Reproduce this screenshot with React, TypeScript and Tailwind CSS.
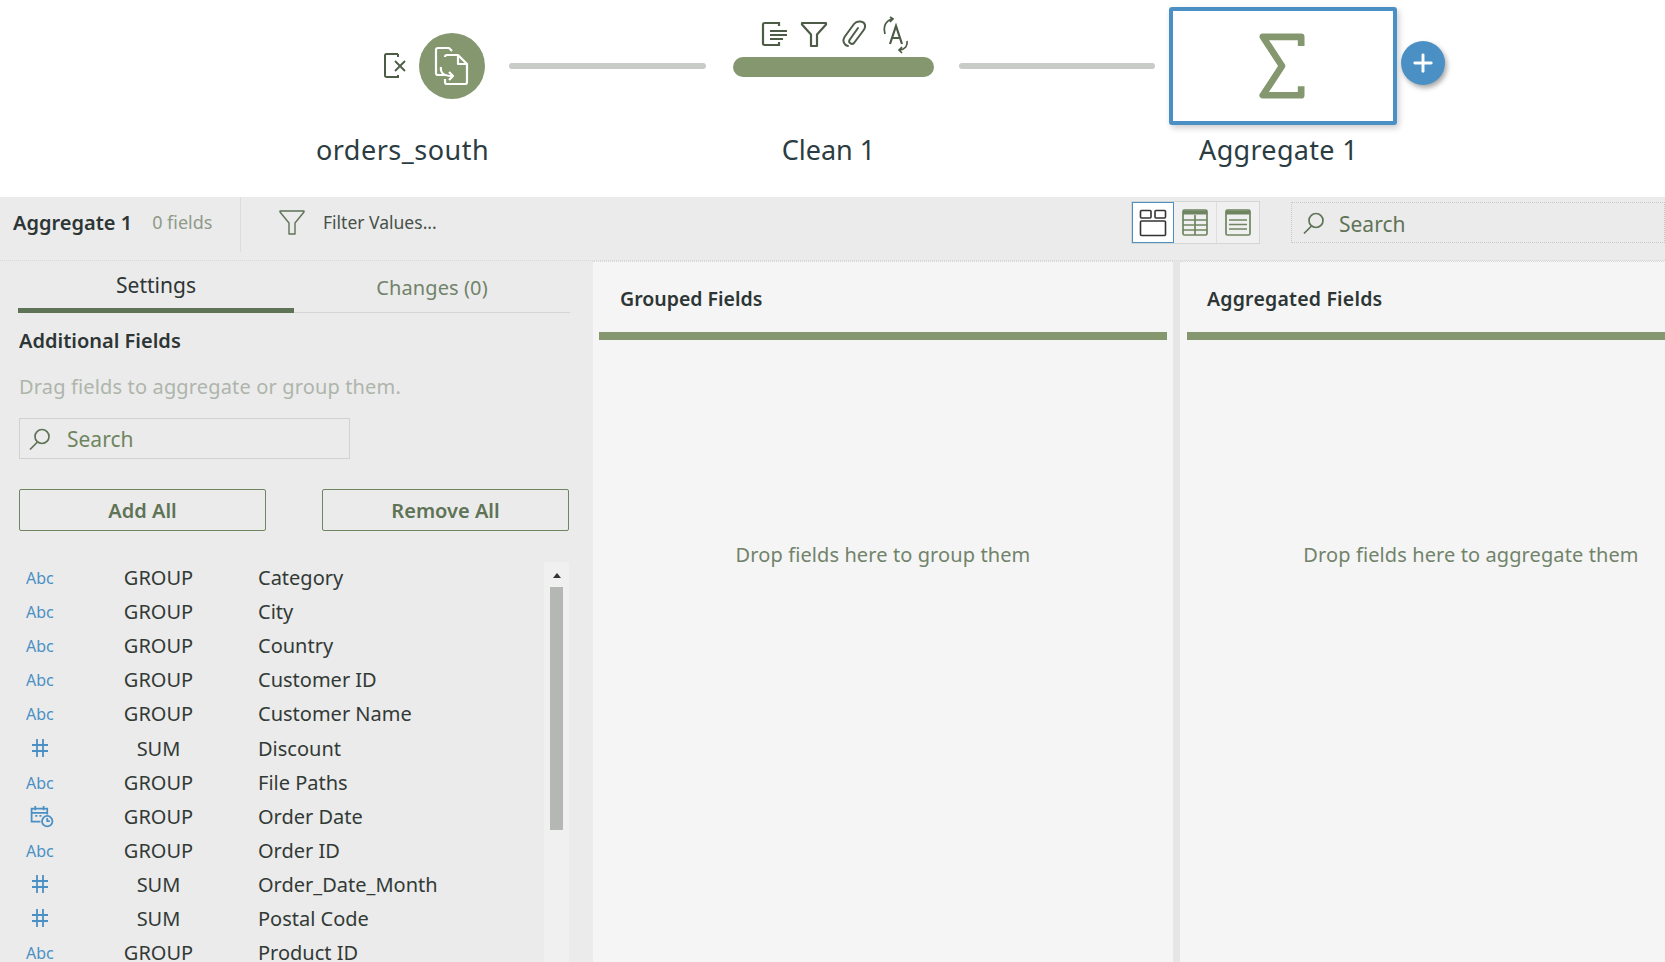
import { Plus } from "lucide-react";

const FONT = "font-['Noto_Sans','Liberation_Sans',sans-serif]";

const fields = [
  { type: "abc", agg: "GROUP", name: "Category" },
  { type: "abc", agg: "GROUP", name: "City" },
  { type: "abc", agg: "GROUP", name: "Country" },
  { type: "abc", agg: "GROUP", name: "Customer ID" },
  { type: "abc", agg: "GROUP", name: "Customer Name" },
  { type: "num", agg: "SUM", name: "Discount" },
  { type: "abc", agg: "GROUP", name: "File Paths" },
  { type: "date", agg: "GROUP", name: "Order Date" },
  { type: "abc", agg: "GROUP", name: "Order ID" },
  { type: "num", agg: "SUM", name: "Order_Date_Month" },
  { type: "num", agg: "SUM", name: "Postal Code" },
  { type: "abc", agg: "GROUP", name: "Product ID" },
];

function FieldType({ type }: { type: string }) {
  if (type === "abc") return <span className="text-[16px] leading-none text-[#4a90c4]">Abc</span>;
  if (type === "num") {
    return (
      <svg width="18" height="20" viewBox="0 0 18 20" fill="none" stroke="#4a90c4" strokeWidth="1.8" className="ml-[5px] -mt-[2px]">
        <path d="M6 1v18M12 1v18M1 7h16M1 13h16" />
      </svg>
    );
  }
  return (
    <svg width="25" height="25" viewBox="0 0 24 24" fill="none" stroke="#4a90c4" strokeWidth="1.7" className="ml-[3px]">
      <path d="M11 17H2.500V4.500h15V10M2.500 8.500h15M6 2v4M14 2v4M6 11.500h2M10 11.500h2" />
      <circle cx="17.500" cy="16.500" r="5" />
      <path d="M17.500 13.500v3h2.500" />
    </svg>
  );
}

function SearchGlass() {
  return (
    <svg width="24" height="24" viewBox="0 0 24 24" fill="none" stroke="#5f7356" strokeWidth="1.7">
      <circle cx="14" cy="9.500" r="7" />
      <path d="M9.500 15L2 22.500" />
    </svg>
  );
}

function ViewButtons() {
  return (
    <div className="flex w-[129px] h-[43px] border border-[#d4d6d4] bg-[#f0f0f0]">
      <div className="w-[42px] h-[41px] border border-[#4a90c4] bg-white flex items-center justify-center">
        <svg width="28" height="28" viewBox="0 0 28 28" fill="none" stroke="#333" strokeWidth="1.6">
          <rect x="1.500" y="1.500" width="10.500" height="7.500" rx="1" />
          <rect x="16" y="1.500" width="10.500" height="7.500" rx="1" />
          <rect x="1.500" y="12" width="25" height="14.500" rx="1" />
        </svg>
      </div>
      <div className="w-[43px] flex items-center justify-center border-r border-[#dedede]">
        <svg width="26" height="27" viewBox="0 0 26 27" fill="none" stroke="#6f8560" strokeWidth="1.7">
          <rect x="1" y="1" width="24" height="25" rx="1.500" />
          <path d="M1 3.500h24" strokeWidth="4" />
          <path d="M1 11h24M1 16h24M1 21h24M13 6v20" />
        </svg>
      </div>
      <div className="flex-1 flex items-center justify-center">
        <svg width="26" height="27" viewBox="0 0 26 27" fill="none" stroke="#6f8560" strokeWidth="1.7">
          <rect x="1" y="1" width="24" height="25" rx="1.500" />
          <path d="M1 3.500h24" strokeWidth="4" />
          <path d="M4 11h18M4 15.500h18M4 20h18" />
        </svg>
      </div>
    </div>
  );
}

function FlowCanvas() {
  return (
    <div className="relative h-[197px] shrink-0 bg-white">
      {/* input step */}
      <svg className="absolute left-[383px] top-[52px]" width="26" height="27" viewBox="0 0 26 27" fill="none" stroke="#4d5c46" strokeWidth="2">
        <path d="M15 2H3.500A1.500 1.500 0 0 0 2 3.500v20A1.500 1.500 0 0 0 3.500 25H15v-2M15 2v3" />
        <path d="M12 9l10 10M22 9L12 19" strokeWidth="1.800" />
      </svg>
      <div className="absolute left-[419px] top-[33px] w-[66px] h-[66px] rounded-full bg-[#84976f] flex items-center justify-center">
        <svg width="40" height="40" viewBox="0 0 40 40" fill="none" stroke="#fff" strokeWidth="2.200" strokeLinejoin="round">
          <path d="M13 29H6a2 2 0 0 1-2-2V4a2 2 0 0 1 2-2h11l3 3" />
          <path d="M13 11a2 2 0 0 1 2-2h11l9 9v18a2 2 0 0 1-2 2H15a2 2 0 0 1-2-2v-3" />
          <path d="M26 9v9h9" />
          <path d="M9 21c-1 6 3 9 11 9M17 26l4 4-4 4" />
        </svg>
      </div>
      <div className="absolute left-[302px] top-[132px] w-[201px] text-center text-[27px] leading-[36px] tracking-[0.5px] text-[#2b3d42] whitespace-nowrap">orders_south</div>

      <div className="absolute left-[509px] top-[63px] w-[197px] h-[6px] rounded-full bg-[#c9cbc9]" />

      {/* clean step */}
      <svg className="absolute left-[761px] top-[20px]" width="28" height="28" viewBox="0 0 28 28" fill="none" stroke="#4d5c46" strokeWidth="2.200">
        <path d="M18 6V3H3.500A1.500 1.500 0 0 0 2 4.500v19A1.500 1.500 0 0 0 3.500 25H18v-3" />
        <path d="M9 11h17M9 15h17M9 19h13" strokeWidth="1.800" />
      </svg>
      <svg className="absolute left-[800px] top-[20px]" width="28" height="28" viewBox="0 0 28 28" fill="none" stroke="#4d5c46" strokeWidth="2.200">
        <path d="M2 3h24v1.500l-9 10V26h-6V14.500L2 4.500z" strokeLinejoin="round" />
      </svg>
      <svg className="absolute left-[840px] top-[19px]" width="28" height="30" viewBox="0 0 28 30" fill="none" stroke="#4d5c46" strokeWidth="2">
        <path d="M8 27c-4-1-6-5-3.500-9L14 5c3-4 10-3 11 1 .5 2-.5 4-2 6l-9 12c-2 2-6 0-4.500-3L18 9" strokeLinecap="round" strokeLinejoin="round" />
      </svg>
      <svg className="absolute left-[881px] top-[16px]" width="30" height="38" viewBox="0 0 30 38" fill="none" stroke="#4d5c46" strokeWidth="2.200">
        <path d="M9 28l6-18 6 18M11 22h8" />
        <path d="M4 18C2 10 5 5 11 3M9 1l3 2-3 3M26 25c1 5-2 8-7 9M21 31l-3 3 3 3" strokeWidth="1.700" />
      </svg>
      <div className="absolute left-[733px] top-[57px] w-[201px] h-[20px] rounded-full bg-[#84976f]" />
      <div className="absolute left-[768px] top-[132px] w-[121px] text-center text-[27px] leading-[36px] text-[#2b3d42] whitespace-nowrap">Clean 1</div>

      <div className="absolute left-[959px] top-[63px] w-[196px] h-[6px] rounded-full bg-[#c9cbc9]" />

      {/* aggregate step */}
      <div className="absolute left-[1169px] top-[7px] w-[228px] h-[118px] rounded-[3px] border-4 border-[#4a90c4] bg-white shadow-[2px_3px_6px_rgba(0,0,0,0.2)] flex items-center justify-center">
        <svg width="46" height="66" viewBox="0 0 48 68" fill="none" stroke="#84976f" strokeWidth="7" className="-ml-[2px] -mt-[1px]">
          <path d="M44 13V3.500H4L24 34 4 64.500h40V55" strokeLinejoin="round" />
        </svg>
      </div>
      <div className="absolute left-[1401px] top-[41px] w-[44px] h-[44px] rounded-full bg-[#4a90c4] shadow-[2px_3px_5px_rgba(0,0,0,0.35)] flex items-center justify-center">
        <Plus size={28} color="#fff" strokeWidth={2.500} />
      </div>
      <div className="absolute left-[1178px] top-[132px] w-[201px] text-center text-[27px] leading-[36px] tracking-[0.3px] text-[#2b3d42] whitespace-nowrap">Aggregate 1</div>
    </div>
  );
}

function Toolbar() {
  return (
    <div className="h-[64px] shrink-0 flex border-b border-dotted border-[#d8d8d8] bg-[#ebebeb]">
      <div className="w-[241px] h-[55px] flex items-center pl-[13px] pb-[4px] border-r border-[#dcdcdc]">
        <span className="text-[20px] font-semibold text-[#2d3535] whitespace-nowrap">Aggregate 1</span>
        <span className="ml-[20px] text-[18px] text-[#8f9a8a] whitespace-nowrap">0 fields</span>
      </div>
      <div className="flex items-start pt-[12px] pl-[38px]">
        <svg width="26" height="27" viewBox="0 0 26 27" fill="none" stroke="#5f7356" strokeWidth="1.400">
          <path d="M1 2h24v1L16 14v11h-6V14L1 3z" strokeLinejoin="round" />
        </svg>
        <span className="ml-[18px] text-[17.500px] leading-[26px] text-[#47524a] whitespace-nowrap">Filter Values...</span>
      </div>
      <div className="ml-auto flex pt-[4px]">
        <ViewButtons />
        <div className="ml-[31px] w-[374px] h-[41px] mt-[1px] border border-dotted border-[#c8c8c8] flex items-center pl-[10px]">
          <SearchGlass />
          <span className="ml-[13px] mt-[2px] text-[21px] leading-[26px] text-[#5f7356]">Search</span>
        </div>
      </div>
    </div>
  );
}

function LeftPanel() {
  return (
    <div className="w-[593px] shrink-0 bg-[#ebebeb] flex flex-col">
      <div className="ml-[18px] w-[552px] h-[52px] flex border-b border-[#d4d4d4]">
        <div className="w-[276px] h-[52px] border-b-[5px] border-[#5f7356] text-center pt-[11px] text-[21px] leading-[27px] text-[#2d3535]">Settings</div>
        <div className="w-[276px] text-center pt-[13px] text-[20px] leading-[27px] tracking-[0.1px] text-[#71836a]">Changes (0)</div>
      </div>
      <div className="pl-[19px] mt-[16px] text-[20px] leading-[24px] font-semibold text-[#2d3535]">Additional Fields</div>
      <div className="pl-[19px] mt-[22px] text-[20px] leading-[24px] tracking-[0.15px] text-[#aeb5ab] whitespace-nowrap">Drag fields to aggregate or group them.</div>
      <div className="ml-[19px] mt-[19px] w-[331px] h-[41px] border border-[#d0d2d0] flex items-center pl-[8px]">
        <SearchGlass />
        <span className="ml-[15px] mt-[1px] text-[21px] leading-[26px] text-[#6f8560]">Search</span>
      </div>
      <div className="ml-[19px] mt-[30px] w-[550px] flex justify-between">
        <div className="w-[247px] h-[42px] border border-[#6f8560] rounded-[2px] flex items-center justify-center pt-[2px] text-[20px] font-semibold text-[#5f7356]">Add All</div>
        <div className="w-[247px] h-[42px] border border-[#6f8560] rounded-[2px] flex items-center justify-center pt-[2px] text-[20px] font-semibold text-[#5f7356]">Remove All</div>
      </div>
      <div className="mt-[31px] flex flex-1 min-h-0 overflow-hidden">
        <div className="w-[544px] -mt-[1px]">
          {fields.map((f) => (
            <div key={f.name} className="h-[34.100px] flex items-center text-[20px] text-[#323a36]">
              <div className="w-[112px] pl-[26px] flex items-center"><FieldType type={f.type} /></div>
              <div className="w-[93px] text-center">{f.agg}</div>
              <div className="pl-[53px] whitespace-nowrap">{f.name}</div>
            </div>
          ))}
        </div>
        <div className="w-[25px] bg-[#f0f0f0] flex flex-col items-center pt-[11px]">
          <div className="w-0 h-0 border-x-[4px] border-x-transparent border-b-[5px] border-b-[#333]" />
          <div className="w-[13px] h-[243px] mt-[9px] bg-[#b5b7b5]" />
        </div>
      </div>
    </div>
  );
}

function DropCard({ title, hint, width, bar, titleClass }: { title: string; hint: string; width: string; bar: string; titleClass: string }) {
  return (
    <div className={`${width} shrink-0 h-full bg-[#f5f5f5] border-t border-dotted border-[#d8d8d8] flex flex-col`}>
      <div className={`h-[70px] shrink-0 pt-[24px] text-[19.500px] leading-[26px] font-semibold text-[#2d3535] ${titleClass}`}>{title}</div>
      <div className={`h-[8px] shrink-0 bg-[#84976f] ${bar}`} />
      <div className="mt-[201px] text-center text-[20px] leading-[28px] tracking-[0.1px] text-[#71836a] whitespace-nowrap">{hint}</div>
    </div>
  );
}

export default function App() {
  return (
    <div className={`w-[1665px] h-[962px] overflow-hidden flex flex-col bg-white ${FONT}`}>
      <FlowCanvas />
      <Toolbar />
      <div className="flex flex-1 min-h-0 bg-[#e6e6e6]">
        <LeftPanel />
        <div className="flex flex-1 min-w-0 gap-[7px] overflow-hidden">
          <DropCard title="Grouped Fields" hint="Drop fields here to group them" width="w-[580px]" bar="mx-[6px]" titleClass="pl-[27px]" />
          <DropCard title="Aggregated Fields" hint="Drop fields here to aggregate them" width="w-[582px]" bar="mx-[7px]" titleClass="pl-[27px] tracking-[0.2px]" />
        </div>
      </div>
    </div>
  );
}
